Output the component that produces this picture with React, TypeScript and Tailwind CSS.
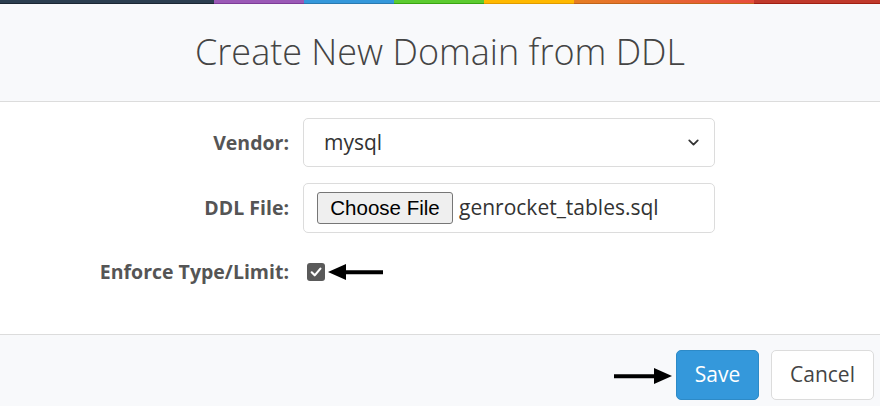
import { ChevronDown } from 'lucide-react';

// Modal: "Create New Domain from DDL" — rainbow top strip, form body, footer buttons.

function Arrow({ dir, width }: { dir: 'left' | 'right'; width: number }): JSX.Element {
  return (
    <svg width={width} height="20" viewBox={`0 0 ${width} 20`} className="block">
      {dir === 'left' ? (
        <>
          <rect x="14" y="8.25" width={width - 14} height="4" fill="#000" />
          <polygon points="0,10 18,2 18,18" fill="#000" />
        </>
      ) : (
        <>
          <rect x="0" y="8.25" width={width - 14} height="4" fill="#000" />
          <polygon points={`${width},10 ${width - 18},2 ${width - 18},18`} fill="#000" />
        </>
      )}
    </svg>
  );
}

export default function App(): JSX.Element {
  return (
    <div className="w-[880px] h-[406px] bg-white overflow-hidden font-['Open_Sans',sans-serif] flex flex-col">
      {/* rainbow strip */}
      <div className="flex h-[4px] shrink-0">
        <div className="w-[214px] bg-[#2c3e50] border-b border-[#1a2633]" />
        <div className="w-[90px] bg-[#9b59b6] border-b border-[#7d3c98]" />
        <div className="w-[90px] bg-[#3498db] border-b border-[#2a7ab0]" />
        <div className="w-[90px] bg-[#5ccb30] border-b border-[#3aa412]" />
        <div className="w-[90px] bg-[#ffb900] border-b border-[#e09b00]" />
        <div className="w-[180px] bg-gradient-to-r from-[#e67e22] to-[#e74c3c] border-b border-[#c0641a]" />
        <div className="flex-1 bg-[#c0392b] border-b border-[#a01f12]" />
      </div>

      <header className="h-[98px] shrink-0 bg-[#f8f9fb] border-b border-[#dcdcdc] flex items-center justify-center">
        <h1 className="text-[36px] font-light text-[#444] pb-[2px]">Create New Domain from DDL</h1>
      </header>

      <main className="flex-1 flex flex-col pt-[16px]">
        <div className="flex items-center h-[49px]">
          <label className="w-[289px] text-right text-[19.5px] font-bold text-[#555]">Vendor:</label>
          <div className="ml-[14px] w-[412px] h-[49px] border border-[#dcdcdc] rounded-[5px] flex items-center justify-between pl-[20px] pr-[12px]">
            <span className="text-[21px] text-[#333]">mysql</span>
            <ChevronDown size={17} strokeWidth={2.5} className="text-[#333]" />
          </div>
        </div>

        <div className="flex items-center h-[50px] mt-[16px]">
          <label className="w-[289px] text-right text-[19.5px] font-bold text-[#555]">DDL File:</label>
          <div className="ml-[14px] w-[412px] h-[50px] border border-[#dcdcdc] rounded-[5px] flex items-center pl-[13px]">
            <span className="h-[32px] w-[136px] flex items-center justify-center bg-[#efefef] border border-[#767676] rounded-[3px] text-[20.5px] text-black font-['Liberation_Sans',Arial,sans-serif]">
              Choose File
            </span>
            <span className="ml-[6px] text-[21px] text-[#333]">genrocket_tables.sql</span>
          </div>
        </div>

        <div className="flex items-center h-[20px] mt-[29px]">
          <label className="w-[289px] text-right text-[19.5px] font-bold text-[#555]">Enforce Type/Limit:</label>
          <div className="ml-[18px] w-[18px] h-[18px] rounded-[3px] bg-[#5a5a5a] flex items-center justify-center">
            <svg width="14" height="14" viewBox="0 0 13 13">
              <path d="M2.5 6.8 L5.3 9.6 L10.6 3.4" stroke="#fff" strokeWidth="2" fill="none" strokeLinecap="round" strokeLinejoin="round" />
            </svg>
          </div>
          <div className="ml-[3px]">
            <Arrow dir="left" width={55} />
          </div>
        </div>
      </main>

      <footer className="h-[72px] shrink-0 bg-[#f8f9fb] border-t border-[#dcdcdc] flex items-start justify-end pr-[6px] pt-[15px]">
        <div className="mt-[16px]">
          <Arrow dir="right" width={58} />
        </div>
        <button className="ml-[4px] w-[83px] h-[50px] rounded-[5px] bg-[#3498db] border border-[#2d8ac7] text-white text-[21px]">
          Save
        </button>
        <button className="ml-[12px] w-[103px] h-[50px] rounded-[5px] bg-white border border-[#dcdcdc] text-[#444] text-[21px]">
          Cancel
        </button>
      </footer>
    </div>
  );
}
